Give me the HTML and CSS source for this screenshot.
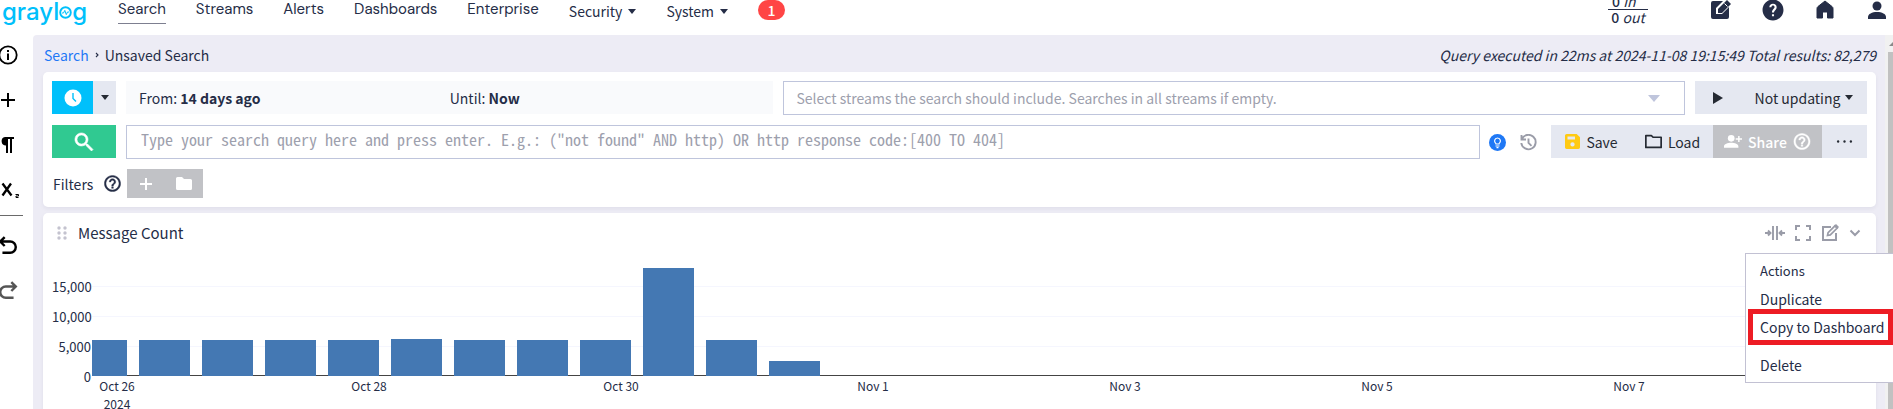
FILE: index.html
```html
<!DOCTYPE html>
<html lang="en">
<head>
<meta charset="utf-8">
<title>Unsaved Search</title>
<link rel="stylesheet" href="styles.css">
</head>
<body>
<svg class="defs" aria-hidden="true">
  <symbol id="help-outline" viewBox="1.500 1.500 21 21"><path stroke="currentColor" stroke-width=".5" d="M11 18h2v-2h-2v2zm1-16C6.480 2 2 6.480 2 12s4.480 10 10 10 10-4.480 10-10S17.520 2 12 2zm0 18c-4.410 0-8-3.590-8-8s3.590-8 8-8 8 3.590 8 8-3.590 8-8 8zm0-14c-2.210 0-4 1.790-4 4h2c0-1.100.9-2 2-2s2 .9 2 2c0 2-3 1.750-3 5h2c0-2.250 3-2.500 3-5 0-2.210-1.790-4-4-4z"/></symbol>
  <symbol id="undo" viewBox="0 0 18 18"><path d="M6 1 2 5l4 4M2.500 5H11a5 5 0 0 1 0 10H4" fill="none" stroke="currentColor" stroke-width="2.200"/></symbol>
</svg>

<header class="topbar">
  <a class="logo" href="#" aria-label="graylog"><span>grayl</span><svg class="logo-o" viewBox="0 0 13 13"><circle cx="6.500" cy="6.500" r="5.300" fill="none" stroke="currentColor" stroke-width="1.900"/><path d="M3 7h1.500l1.300-2.600 1.500 4.200L8.500 6H10" fill="none" stroke="currentColor"/></svg><span>g</span></a>
  <nav class="nav">
    <a class="nav-link active" href="#">Search</a>
    <a class="nav-link" href="#">Streams</a>
    <a class="nav-link" href="#">Alerts</a>
    <a class="nav-link" href="#">Dashboards</a>
    <a class="nav-link" href="#">Enterprise</a>
    <button class="nav-menu">Security<span class="caret"></span></button>
    <button class="nav-menu">System<span class="caret"></span></button>
    <a class="badge" href="#">1</a>
  </nav>
  <div class="top-tools">
    <div class="throughput"><span><b>0</b> <i>in</i></span><span><b>0</b> <i>out</i></span></div>
    <button class="tool" aria-label="Scratchpad"><svg viewBox="0 0 22 22"><path d="M3 2h10l-7 7v6h6l7-7v10a2 2 0 0 1-2 2H3a2 2 0 0 1-2-2V4a2 2 0 0 1 2-2z"/><path d="m8 10 9-9 4 4-9 9H8z"/><path d="m14.500 4.500 3 3" stroke="#fff"/></svg></button>
    <button class="tool" aria-label="Help"><svg viewBox="1.500 1.500 21 21"><path d="M12 2C6.480 2 2 6.480 2 12s4.480 10 10 10 10-4.480 10-10S17.520 2 12 2zm1 16h-2v-2h2v2zm1.700-6.400-.8.800C13.300 13 13 13.500 13 14.500h-2V14c0-1 .4-1.900 1-2.500l1-1.100c.3-.3.500-.7.500-1.100 0-.9-.7-1.500-1.500-1.500s-1.500.6-1.500 1.500H8.500C8.500 7.400 10 6 12 6s3.500 1.400 3.500 3.300c0 .9-.3 1.700-.8 2.300z"/></svg></button>
    <button class="tool" aria-label="Welcome"><svg viewBox="0 0 22 22"><path d="M11 2 4 7.500Q3 8.300 3 9.500V19h5.500v-6h5v6H19V9.500q0-1.200-1-2z" stroke="currentColor" stroke-linejoin="round"/></svg></button>
    <button class="tool" aria-label="User menu"><svg viewBox="0 0 22 22"><circle cx="11" cy="7" r="4.500"/><path d="M2 20v-2c0-3 4-5 9-5s9 2 9 5v2z"/></svg></button>
  </div>
</header>

<div class="shell">
  <aside class="sidebar">
    <div class="side-group">
      <button aria-label="Info"><svg viewBox="0 0 20 20"><circle cx="10" cy="10" r="8.700" fill="none" stroke="currentColor" stroke-width="1.800"/><path d="M9 5h2v2H9zM9 8.500h2V15H9z"/></svg></button>
      <button aria-label="Create"><svg viewBox="0 0 20 20"><path d="M9 3h2v6h6v2h-6v6H9v-6H3V9h6z"/></svg></button>
      <button aria-label="Highlighting"><svg viewBox="0 0 20 20"><path d="M7 2h9v2h-2v14h-2V4h-2v14H8v-7.500A4.300 4.300 0 0 1 7 2z"/></svg></button>
      <button aria-label="Fields"><svg viewBox="0 0 20 20"><path d="M4.500 3.500l9 12M13 3.500l-8.500 12" stroke="currentColor" stroke-width="2.300" fill="none"/><path d="M17.500 14.500h3V16H18v1.500h2.500" stroke="currentColor" fill="none"/></svg></button>
    </div>
    <div class="side-group history">
      <button aria-label="Undo"><svg viewBox="0 0 18 18"><use href="#undo"/></svg></button>
      <button class="muted" aria-label="Redo"><svg class="flip" viewBox="0 0 18 18"><use href="#undo"/></svg></button>
    </div>
  </aside>

  <main class="page">
    <div class="crumb-row">
      <div class="crumbs"><a href="#">Search</a><svg viewBox="0 0 6 8"><path d="m2 2 2 2-2 2" fill="none" stroke="currentColor" stroke-width="1.100"/></svg><span>Unsaved Search</span></div>
      <i>Query executed in 22ms at 2024-11-08 19:15:49 Total results: 82,279</i>
    </div>

    <section class="card search-bar">
      <div class="row time-row">
        <div class="time-buttons">
          <button class="time-main" aria-label="Open time range selector"><svg viewBox="0 0 18 18"><circle cx="9" cy="9" r="8.500"/><path d="M9 4v5.500l3 3" fill="none" stroke="#00c0fb" stroke-width="1.400"/></svg></button>
          <button class="time-drop" aria-label="Time range presets"><span class="caret"></span></button>
        </div>
        <div class="range"><span>From: <b>14 days ago</b></span><span>Until: <b>Now</b></span></div>
        <div class="streams">
          <select aria-label="Streams"><option>Select streams the search should include. Searches in all streams if empty.</option></select>
          <span class="select-arrow"></span>
        </div>
        <div class="refresh">
          <button class="play" aria-label="Start refresh"><svg viewBox="0 0 10 12"><path d="M0 0l10 6-10 6z"/></svg></button>
          <button class="interval">Not updating<span class="caret"></span></button>
        </div>
      </div>
      <div class="row query-row">
        <button class="go" aria-label="Perform search"><svg viewBox="2 2 20 20"><path d="M15.500 14h-.8l-.3-.3A6.500 6.500 0 1 0 13.700 14.400l.3.300v.8l5.500 5.500 1.500-1.500-5.500-5.500zm-6 0a4.500 4.500 0 1 1 0-9 4.500 4.500 0 0 1 0 9z" stroke="currentColor" stroke-width=".6"/></svg></button>
        <input class="query" type="text" aria-label="Query" placeholder="Type your search query here and press enter. E.g.: (&quot;not found&quot; AND http) OR http response code:[400 TO 404]">
        <div class="query-tools">
          <button class="bulb" aria-label="Query help"><svg viewBox="0 0 17 17"><circle cx="8.500" cy="8.500" r="8.500"/><path d="M7 9.700C4.500 8 5.500 4 8.500 4s4 4 1.500 5.700V10H7zM6.500 12h4M7.500 13.700h2" fill="none" stroke="#fff" stroke-width="1.200"/></svg></button>
          <button class="recent" aria-label="Query history"><svg viewBox="0 0 17 17"><path d="M1.500 1v4.500H6M1.800 5.300A7.200 7.200 0 1 1 1.300 9M8.500 4.500v4.300l3 3" fill="none" stroke="currentColor" stroke-width="1.900"/></svg></button>
        </div>
        <div class="actions">
          <button class="save"><svg viewBox="3 3 18 18"><path fill="#ffca13" d="M17 3H5c-1.100 0-2 .9-2 2v14c0 1.100.9 2 2 2h14c1.100 0 2-.9 2-2V7l-4-4zm-5 15a2.600 2.600 0 1 1 0-5.200 2.600 2.600 0 0 1 0 5.200zm3-8.500H6V6h9z"/></svg>Save</button>
          <button class="load"><svg viewBox="2 3 20 18"><path d="M3 5h6.500l2 2H21v12H3z" fill="none" stroke="currentColor" stroke-width="2" stroke-linejoin="round"/></svg>Load</button>
          <button class="share" disabled><svg viewBox="0 0 20 16"><circle cx="8" cy="4.500" r="3.700"/><path d="M0 15v-1.500C0 11 4 9.500 8 9.500s8 1.500 8 4V15zM15.700 2h1.600v2.500H20V6h-2.700v2.500h-1.600V6H13V4.500h2.700z"/></svg>Share<svg><use href="#help-outline"/></svg></button>
          <button class="more" aria-label="More actions"><svg viewBox="0 0 16 4"><circle cx="2" cy="2" r="1.100"/><circle cx="8" cy="2" r="1.100"/><circle cx="14" cy="2" r="1.100"/></svg></button>
        </div>
      </div>
      <div class="row filter-row">
        <span class="filter-label">Filters</span>
        <svg class="filter-help"><use href="#help-outline"/></svg>
        <div class="filter-buttons">
          <button disabled aria-label="Create filter"><svg viewBox="0 0 12 12"><path d="M5 0h2v5h5v2H7v5H5V7H0V5h5z"/></svg></button>
          <button disabled aria-label="Load filter"><svg class="folder" viewBox="0 0 16 13"><path d="M1.500 0H6l2 2h6.500Q16 2 16 3.500v8q0 1.500-1.500 1.500h-13Q0 13 0 11.500v-10Q0 0 1.500 0z"/></svg></button>
        </div>
      </div>
    </section>

    <section class="card widget">
      <div class="widget-head">
        <svg class="grip" viewBox="0 0 10 14"><circle cx="2" cy="2" r="1.700"/><circle cx="8" cy="2" r="1.700"/><circle cx="2" cy="7" r="1.700"/><circle cx="8" cy="7" r="1.700"/><circle cx="2" cy="12" r="1.700"/><circle cx="8" cy="12" r="1.700"/></svg>
        <h2>Message Count</h2>
        <div class="widget-tools">
          <button aria-label="Stretch width"><svg width="20" height="16" viewBox="0 0 20 16"><path d="M8 1v14M12 1v14M0 8h5M3 5.500 5.500 8 3 10.500M20 8h-5M17 5.500 14.500 8l2.500 2.500" fill="none" stroke="currentColor" stroke-width="1.900"/></svg></button>
          <button aria-label="Focus widget"><svg width="16" height="16" viewBox="0 0 16 16"><path d="M1 5V1h4M11 1h4v4M15 11v4h-4M5 15H1v-4" fill="none" stroke="currentColor" stroke-width="2"/></svg></button>
          <button aria-label="Edit"><svg width="18" height="18" viewBox="0 0 18 18"><path d="M10 3H2v13h13V9" fill="none" stroke="currentColor" stroke-width="2"/><path d="m6.500 11.500.6-2.800L14 1.800l2.200 2.200-6.900 6.900z" fill="none" stroke="currentColor" stroke-width="1.700"/><path d="m13 2 2-2 3 3-2 2z"/></svg></button>
          <button aria-label="Open actions"><svg width="12" height="16" viewBox="0 0 12 16"><path d="m1.500 5.500 4.500 4.500 4.500-4.500" fill="none" stroke="currentColor" stroke-width="2"/></svg></button>
        </div>
      </div>
      <div class="chart">
        <div class="y-axis"><span>15,000</span><span>10,000</span><span>5,000</span><span>0</span></div>
        <div class="plot-col">
          <div class="plot">
            <span class="bar first" style="height:33%"></span>
            <span class="bar" style="height:33%"></span>
            <span class="bar" style="height:33%"></span>
            <span class="bar" style="height:33%"></span>
            <span class="bar" style="height:33%"></span>
            <span class="bar" style="height:34%"></span>
            <span class="bar" style="height:33%"></span>
            <span class="bar" style="height:33%"></span>
            <span class="bar" style="height:33%"></span>
            <span class="bar" style="height:99%"></span>
            <span class="bar" style="height:33%"></span>
            <span class="bar" style="height:14%"></span>
          </div>
          <div class="x-axis"><span>Oct 26<br>2024</span><span>Oct 28</span><span>Oct 30</span><span>Nov 1</span><span>Nov 3</span><span>Nov 5</span><span>Nov 7</span></div>
        </div>
      </div>
      <div class="menu">
        <div class="menu-title">Actions</div>
        <button>Duplicate</button>
        <button class="marked">Copy to Dashboard</button>
        <button class="delete">Delete</button>
      </div>
    </section>
  </main>
  <div class="scrollbar"><svg viewBox="0 0 8 4"><path d="M0 4 4 0l4 4z"/></svg><span></span></div>
</div>
</body>
</html>
```
FILE: styles.css
```css
* { box-sizing: border-box; }
body {
  margin: 0;
  height: 100vh;
  overflow: hidden;
  display: flex;
  flex-direction: column;
  background: #fff;
  color: #252d47;
  font: 14px/20px "Noto Sans CJK SC", "Open Sans", sans-serif;
}
button, select, input { font: inherit; color: inherit; border: 0; margin: 0; padding: 0; background: none; }
button { display: flex; align-items: center; justify-content: center; white-space: nowrap; }
a { color: inherit; text-decoration: none; }
svg { fill: currentColor; display: block; flex: none; }
.defs { position: absolute; width: 0; height: 0; }
.caret { border: 4px solid transparent; border-top: 5px solid currentColor; border-bottom: 0; }

/* top bar */
.topbar { flex: none; height: 35px; display: flex; align-items: flex-start; }
.logo {
  width: 118px; height: 24px; padding-left: 2px;
  display: flex; align-items: flex-end;
  color: #00c0fb; font: 500 24px/24px Inter, sans-serif;
}
.logo-o { width: 13px; height: 13px; margin-bottom: 5px; }
.nav { display: flex; gap: 30px; height: 24px; align-items: flex-start; }
.nav-link { height: 24px; font: 15px/18px "DM Sans", Inter, sans-serif; }
.nav-link.active { border-bottom: 1px solid #7d7f90; }
.nav-menu { height: 22px; gap: 6px; }
.badge {
  width: 27px; height: 20px; border-radius: 10px;
  background: #ff4545; color: #fff; font-weight: 500; text-align: center;
}
.top-tools { margin-left: auto; display: flex; padding-right: 5px; }
.throughput {
  width: 40px; height: 25px; margin-right: 62px;
  display: flex; flex-direction: column; justify-content: flex-end; align-items: center;
  font-size: 14px; line-height: 15px; white-space: nowrap;
}
.throughput span:first-child { width: 40px; padding-left: 4px; border-bottom: 1px solid; }
.throughput b { font-weight: 500; }
.tool { width: 22px; height: 20px; margin-left: 30px; }
.tool:first-of-type { margin-left: 0; }
.tool svg { width: 22px; height: 22px; }

/* shell */
.shell { flex: 1; min-height: 0; display: flex; }
.sidebar { width: 33px; flex: none; padding-top: 10px; color: #000; }
.side-group { display: flex; flex-direction: column; gap: 25px; margin-left: -2px; }
.side-group svg { width: 20px; height: 20px; overflow: visible; }
.side-group button { width: 20px; height: 20px; }
.side-group.history { width: 25px; margin-top: 15px; padding-top: 20px; border-top: 1px solid #6a6a6a; }
.side-group .muted { color: #555; }
.flip { transform: scaleX(-1); }
.page {
  flex: 1; min-width: 0; padding: 10px 9px 0 10px;
  background: #edecf5; border-top-left-radius: 4px;
  display: flex; flex-direction: column;
}
.crumb-row { flex: none; display: flex; justify-content: space-between; padding-left: 1px; height: 27px; }
.crumbs { display: flex; align-items: center; gap: 5px; height: 20px; }
.crumbs a { color: #1f78f5; }
.crumbs svg { width: 6px; height: 8px; }
.card { background: #fff; border-radius: 5px; box-shadow: 0 2px 4px rgba(40, 40, 60, .06); }

/* search bar */
.search-bar { padding: 9px; flex: none; }
.row { display: grid; column-gap: 10px; }
.time-row { grid-template-columns: 64px 418fr 582fr 172px; height: 34px; }
.time-buttons { display: flex; height: 33px; }
.time-main { flex: 1; background: #00c0fb; color: #fff; }
.time-main svg { width: 18px; height: 18px; }
.time-drop { width: 23px; background: #e5e8f1; color: #252a33; }
.range { display: grid; grid-template-columns: 1fr 1fr; align-items: center; height: 33px; padding: 0 13px; background: #f9fafc; }
.streams { display: grid; align-items: center; border: 1px solid #bfc5dc; }
.streams select { grid-area: 1 / 1; appearance: none; width: 100%; height: 32px; padding-left: 12px; color: #9da0ad; }
.select-arrow { grid-area: 1 / 1; justify-self: end; margin-right: 24px; border: 6px solid transparent; border-top: 7px solid #bfc5dc; border-bottom: 0; pointer-events: none; }
.refresh { display: flex; height: 33px; background: #e5e8f1; color: #252a33; }
.play { width: 46px; }
.play svg { width: 10px; height: 12px; }
.interval { flex: 1; gap: 5px; }
.query-row { display: flex; margin-top: 10px; }
.go { width: 64px; height: 33px; background: #30c991; color: #fff; }
.go svg { width: 20px; height: 20px; }
.query {
  flex: 1; min-width: 0; height: 34px; border: 1px solid #bfc5dc; padding: 0 14px 7px;
  font: 16px/20px "Noto Sans Mono CJK SC", "DejaVu Sans Mono", monospace;
}
.query::placeholder { color: #9da0ad; opacity: 1; }
.query-tools { display: flex; gap: 14px; margin: 0 4px 0 -1px; align-items: center; }
.query-tools svg { width: 17px; height: 17px; }
.bulb { color: #1f78f5; }
.recent { color: #9a9ca8; }
.actions { display: flex; width: 316px; height: 33px; background: #e5e8f1; color: #252a33; }
.actions button { gap: 6px; }
.actions svg { width: 17px; height: 17px; }
.save { width: 81px; }
.save svg { width: 15px; height: 15px; }
.load { width: 81px; }
.share { width: 109px; background: #c1c2c6; color: #fff; font-weight: 500; }
.actions .share svg { height: 17px; width: 18px; }
.more { width: 45px; }
.filter-row { display: flex; column-gap: 0; align-items: center; height: 29px; margin-top: 10px; padding-left: 1px; }
.filter-label { width: 51px; }
.filter-help { width: 17px; height: 17px; margin-right: 6px; }
.filter-buttons { display: flex; width: 76px; height: 29px; background: #c1c2c6; color: #fff; }
.filter-buttons button { flex: 1; color: #fff; }
.filter-buttons svg { width: 12px; height: 12px; }
.filter-buttons .folder { width: 16px; height: 13px; }

/* message count widget */
.widget { position: relative; flex: 1 0 auto; margin-top: 6px; padding: 9px; border-radius: 5px 5px 0 0; }
.widget-head { display: flex; align-items: center; height: 22px; padding-left: 5px; }
.grip { width: 10px; height: 14px; color: #c4c3cf; }
.widget h2 { margin: 0 0 0 11px; font-size: 15px; font-weight: 400; }
.widget-tools { margin-left: auto; display: flex; align-items: center; gap: 10px; padding-right: 6px; color: #9a9ca8; }
.chart { display: flex; margin-top: 11px; font-size: 12px; line-height: 16px; }
.y-axis { width: 40px; padding-top: 24px; display: flex; flex-direction: column; gap: 14px; text-align: right; padding-right: 1px; font-size: 13px; }
.plot-col { flex: 1; min-width: 0; overflow: hidden; }
.plot {
  height: 110px; margin-top: 11px; display: flex; align-items: flex-end; column-gap: .676%;
  border-bottom: 1px solid #444;
  background: linear-gradient(#f5f6fe 1px, transparent 1px) 0 20px / 100% 30px;
}
.bar { flex: none; width: 2.873%; background: #4478b3; margin-bottom: -1px; }
.bar.first { width: 1.972%; }
.x-axis { display: flex; margin-left: -5.690%; padding-top: 1px; text-align: center; }
.x-axis span { flex: 0 0 13.433%; line-height: 18px; }

.menu {
  position: absolute; z-index: 2; top: 40px; right: -17px; width: 148px;
  display: flex; flex-direction: column; gap: 2px; padding: 4px 5px 4px 7px;
  background: #fff; border: 1px solid #c2c1d3; border-right: 0;
}
.menu button, .menu-title { height: 26px; padding-left: 7px; line-height: 26px; justify-content: flex-start; }
.menu-title { font-size: 13px; }
.menu .marked { outline: 5px solid #ed1c24; }
.menu .delete { margin-top: 10px; }

.scrollbar { width: 8px; flex: none; display: flex; flex-direction: column; background: #f1f1f1; align-items: flex-end; }
.scrollbar svg { width: 8px; height: 4px; margin: 7px -4px 6px 0; color: #8a8a8a; }
.scrollbar span { flex: 1; width: 5px; background: #c1c1c1; }
```
